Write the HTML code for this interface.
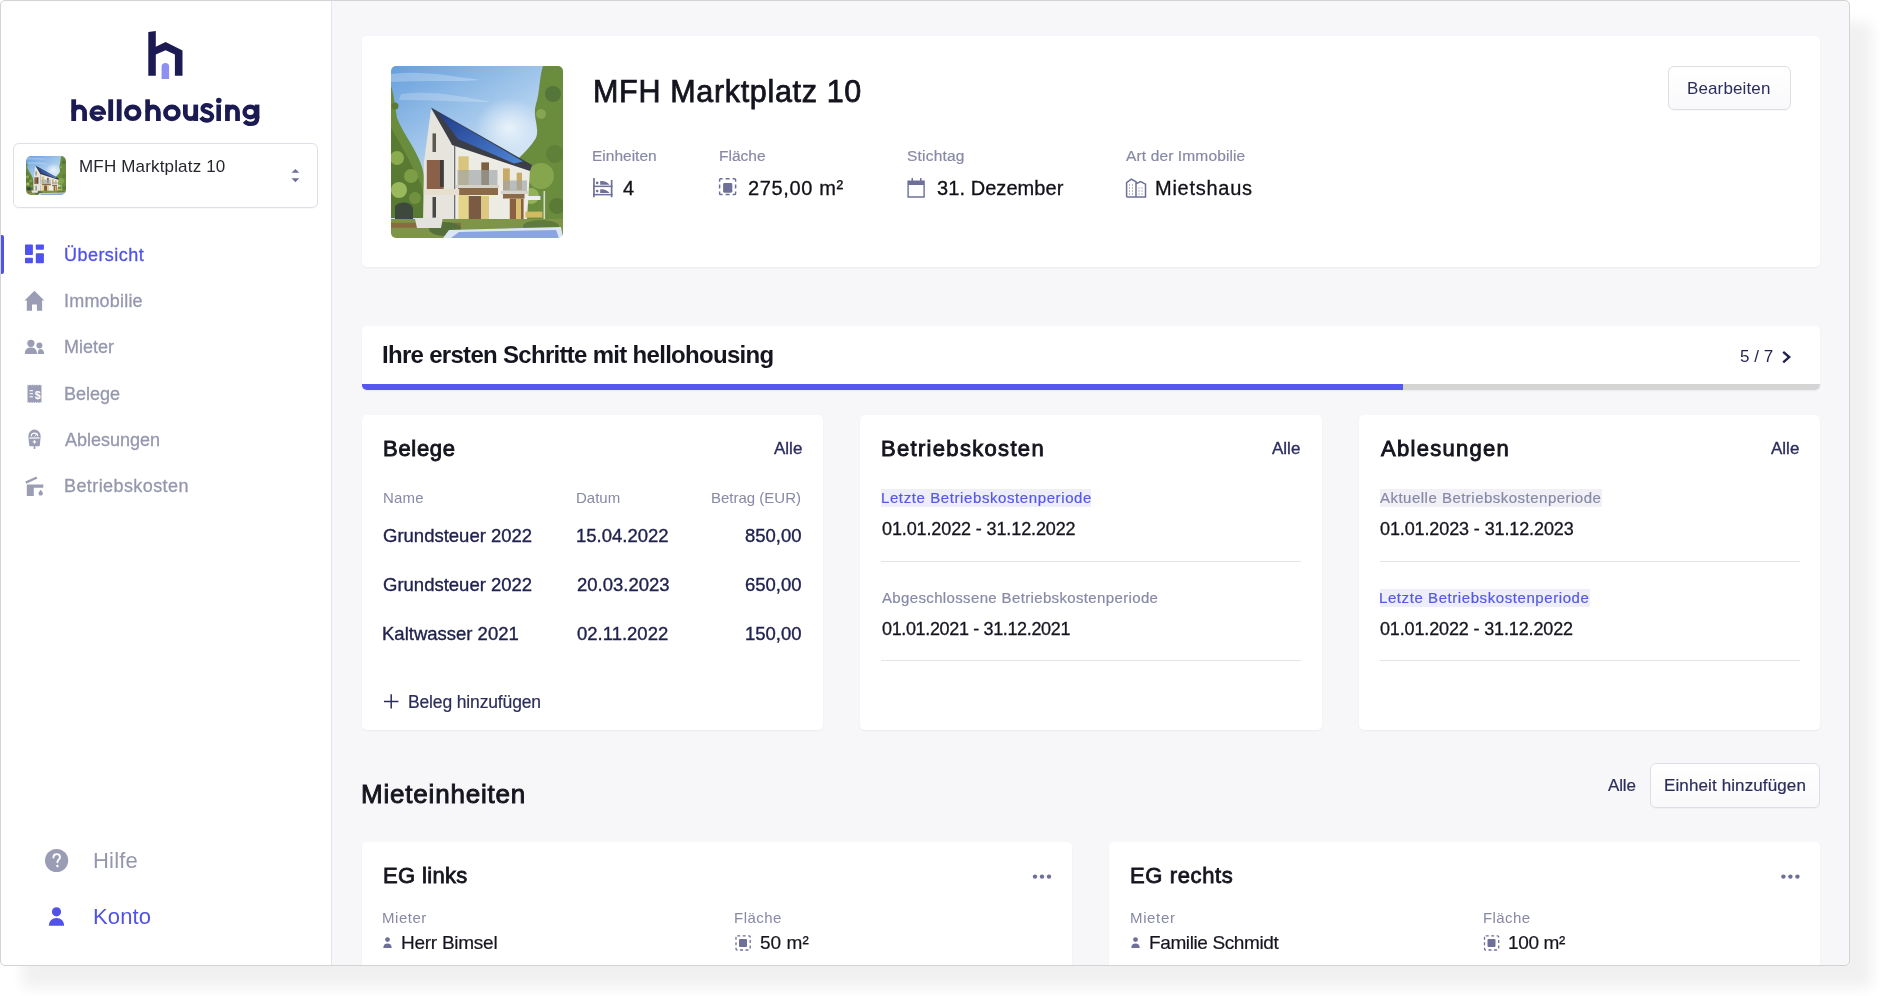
<!DOCTYPE html>
<html><head><meta charset="utf-8"><title>hellohousing</title>
<style>
html,body{margin:0;padding:0;width:1880px;height:996px;background:#fff;overflow:hidden;font-family:"Liberation Sans", sans-serif;}
.t{position:absolute;white-space:nowrap;font-family:"Liberation Sans", sans-serif;will-change:transform;}
.abs{position:absolute;}
#shadow{position:absolute;left:0;top:0;width:1850px;height:966px;border-radius:5px;box-shadow:22px 22px 14px rgba(0,0,0,0.06);}
#clip{position:absolute;left:0;top:0;width:1850px;height:966px;border-radius:5px;overflow:hidden;background:#f7f7f9;}
#frameborder{position:absolute;left:0;top:0;width:1850px;height:966px;border-radius:5px;border:1px solid #d3d3d3;box-sizing:border-box;pointer-events:none;z-index:50;}
#sidebar{position:absolute;left:0;top:0;width:331px;height:966px;background:#fff;border-right:1px solid #e4e4eb;}
.card{position:absolute;background:#fff;border-radius:5px;box-shadow:0 1px 2px rgba(20,20,60,0.05);}
.btn{position:absolute;box-sizing:border-box;border:1px solid #dddee4;border-radius:6px;background:linear-gradient(#ffffff,#f9f9fb);box-shadow:0 1px 1px rgba(0,0,0,0.03);}
.hl{position:absolute;background:#eeeefb;}
.div{position:absolute;height:1px;background:#e3e3e8;}
svg{position:absolute;overflow:visible;}

</style></head><body>
<div id="shadow"></div>
<div id="clip">
  <div id="sidebar"></div>
  <!-- logo mark -->
  <svg style="left:0;top:0" width="1" height="1">
    <polygon fill="#1b1a52" points="148.3,31.9 155.8,31.1 155.8,46.8 165.6,42.1 182.5,50.5 182.5,75.8 174.9,75.8 174.9,54.6 165.6,50.2 155.8,54.6 155.8,75.8 148.3,75.8"/>
    <path fill="#8d8ff2" d="M161.6,79.1 V66.5 a3.75,3.6 0 0 1 7.5,0 V79.1 Z"/>
  </svg>
  <!-- wordmark -->
  <svg style="left:0;top:0" width="1" height="1">
    <g fill="#1b1a52"><rect x="71.3" y="99.3" width="4.80" height="21.70"/><rect x="108.3" y="99.3" width="4.80" height="21.70"/><rect x="116.8" y="99.3" width="4.80" height="21.70"/><rect x="145.3" y="99.3" width="4.60" height="21.70"/><rect x="193.4" y="104.6" width="4.70" height="16.40"/><rect x="216.4" y="104.6" width="4.55" height="16.40"/><circle cx="218.8" cy="100.5" r="2.75"/><rect x="225.1" y="104.6" width="4.70" height="16.40"/><rect x="254.7" y="104.6" width="4.70" height="13.90"/></g>
    <g fill="none" stroke="#1b1a52" stroke-width="4.7"><path d="M73.70,112.40 A5.45,5.45 0 0 1 84.60,112.40 V121.0" /><path stroke-width="3.2" d="M90.50,113.20 H105.90"/><path stroke-width="4.3" d="M91.50,112.80 A6.15,6.15 0 0 1 103.80,114.30"/><path stroke-width="4.3" d="M91.50,112.80 A6.15,6.15 0 0 0 102.45,116.67"/><ellipse cx="132.75" cy="112.8" rx="6.40" ry="5.95"/><path d="M147.60,112.35 A5.40,5.40 0 0 1 158.40,112.35 V121.0" /><ellipse cx="171.9" cy="112.9" rx="6.45" ry="5.95"/><path d="M185.35,104.6 V113.45 A5.20,5.20 0 0 0 195.75,113.45" /><path stroke-width="4.3" d="M211.9,107.6 C210.6,105.9 208.8,105.2 206.9,105.2 C204.2,105.2 202.6,106.6 202.6,108.4 C202.6,110.9 205.2,111.6 207.4,112.2 C210,112.9 212.1,113.7 212.1,116.5 C212.1,118.9 209.9,120.5 207.1,120.5 C204.7,120.5 202.5,119.4 201,117.4"/><path d="M227.45,112.00 A5.05,5.05 0 0 1 237.55,112.00 V121.0" /><ellipse stroke-width="4.4" cx="250.3" cy="112.0" rx="5.75" ry="5.2"/><path stroke-width="4.4" d="M257.05,116 V118.6 C257.05,122.6 254.4,123.9 250.5,123.9 C248,123.9 246.1,123.1 244.5,121.3"/></g>
  </svg>
  <!-- select -->
  <div class="btn" style="left:13px;top:143px;width:305px;height:65px;background:#fff;border-color:#dfe0e7;"></div>
  <div class="abs" style="left:26px;top:156px;width:40px;height:39px;border-radius:5px;overflow:hidden;"><svg style="left:0;top:0" width="40" height="39" viewBox="0 0 172 172" preserveAspectRatio="none"><use href="#houseimg"/></svg></div>
  <svg style="left:0;top:0" width="1" height="1">
    <polygon fill="#6e7099" points="291.5,172.8 295.4,168.9 299.3,172.8"/>
    <polygon fill="#6e7099" points="291.5,178.3 295.4,182.2 299.3,178.3"/>
  </svg>
  <!-- active indicator -->
  <div class="abs" style="left:1px;top:235px;width:3px;height:39px;background:#5053e6;border-radius:0 2px 2px 0;"></div>
  <!-- nav icons -->
  <svg style="left:0;top:0" width="1" height="1">
    <g fill="#4f52ee">
      <rect x="25" y="244.4" width="7.9" height="10.5" rx="0.7"/>
      <rect x="25" y="257.8" width="7.9" height="5.5" rx="0.7"/>
      <rect x="35.8" y="244.6" width="8.1" height="5.2" rx="0.7"/>
      <rect x="35.8" y="253.3" width="8.1" height="10" rx="0.7"/>
    </g>
    <g fill="#9b9db4">
      <!-- home -->
      <path d="M34.4,290.8 L44.3,300.4 L42.1,300.4 L42.1,310.7 L36.9,310.7 L36.9,304.6 L32.0,304.6 L32.0,310.7 L26.8,310.7 L26.8,300.4 L24.5,300.4 Z"/>
      <!-- people -->
      <circle cx="30.9" cy="343.3" r="3.6"/>
      <path d="M24.8,353.9 C24.8,349.5 27.5,347.6 30.9,347.6 C34.3,347.6 37,349.5 37,353.9 Z"/>
      <circle cx="39.4" cy="345.4" r="3"/>
      <path d="M37.7,353.9 C38,351 38.3,349 40,348.9 C42.8,348.9 44.1,351 44.1,353.9 Z"/>
      <!-- receipt -->
      <path d="M27.5,384.5 l1.2,1 1.2,-1 1.15,1 1.15,-1 1.15,1 1.15,-1 1.15,1 1.15,-1 1.15,1 1.15,-1 1.15,1 1.2,-1 V402.9 l-1.2,-1 -1.15,1 -1.15,-1 -1.15,1 -1.15,-1 -1.15,1 -1.15,-1 -1.15,1 -1.15,-1 -1.15,1 -1.2,-1 -1.2,1 Z"/>
      <!-- meter -->
      <path d="M28.4,435.7 A6.1,6.1 0 0 1 40.6,435.7 L40.6,437.2 L39.8,445.5 Q39.7,446.3 38.9,446.3 L35.3,446.3 V448.9 H33.7 V446.3 H30.1 Q29.3,446.3 29.2,445.5 L28.4,437.2 Z"/>
      <!-- faucet -->
      <path d="M25.3,481.6 L36.4,476.4 L37.4,478.5 L26.3,483.7 Z"/>
      <path d="M26.8,484.4 L43.3,484.4 L43.3,487.8 L33.8,487.8 L33.8,495.9 L26.8,495.9 Z"/>
      <path d="M40.7,489.8 C41.7,491.2 42.9,492.4 42.9,493.4 A2.2,2.2 0 0 1 38.5,493.4 C38.5,492.4 39.7,491.2 40.7,489.8 Z"/>
    </g>
    <g fill="#fff">
      <rect x="29.6" y="390.1" width="3.3" height="1.1"/>
      <rect x="29.6" y="393.1" width="3.3" height="1.1"/>
      <rect x="29.6" y="396.2" width="3.3" height="1.1"/>
      <rect x="29.4" y="437.4" width="10.2" height="1.2"/>
      <rect x="33.9" y="440.2" width="1.2" height="3.4"/>
      <rect x="32.8" y="441.3" width="3.4" height="1.2"/>
    </g>
    <path d="M31.3,436.3 A3.2,3.2 0 0 1 37.7,436.3" fill="none" stroke="#fff" stroke-width="1.1"/><path d="M34.5,436.2 L37.2,433.6" fill="none" stroke="#fff" stroke-width="1"/>
    <text x="37.6" y="398.9" font-family="Liberation Sans" font-weight="700" font-size="10.5" fill="#fff" text-anchor="middle">$</text>
    <!-- help -->
    <circle cx="56.6" cy="860.5" r="11.6" fill="#9b9db4"/>
    <path d="M53.4,857.6 C53.4,855.4 54.9,854.1 56.7,854.1 C58.6,854.1 60,855.4 60,857.2 C60,859.6 57.4,859.8 57.4,862.2" fill="none" stroke="#fff" stroke-width="1.9" stroke-linecap="round"/><circle cx="57.4" cy="866" r="1.2" fill="#fff"/>
    <!-- konto -->
    <g fill="#5053e6">
      <circle cx="56.5" cy="911.8" r="4.6"/>
      <path d="M48.9,925.8 C48.9,920.8 52.2,917.9 56.5,917.9 C60.8,917.9 64.1,920.8 64.1,925.8 Z"/>
    </g>
  </svg>

  <!-- HEADER CARD -->
  <div class="card" style="left:362px;top:36px;width:1458px;height:231px;"></div>
  <svg style="left:391px;top:66px;filter:blur(0.45px)" width="172" height="172" viewBox="0 0 172 172">
    <defs>
      <clipPath id="imgclip"><rect x="0" y="0" width="172" height="172" rx="5"/></clipPath>
      <linearGradient id="sky" x1="0" y1="0" x2="0.6" y2="1">
        <stop offset="0" stop-color="#659fdc"/>
        <stop offset="0.45" stop-color="#a6c9ec"/>
        <stop offset="0.8" stop-color="#dcebf7"/>
      </linearGradient>
      <radialGradient id="skylight"><stop offset="0" stop-color="#eef5fb" stop-opacity="0.9"/><stop offset="1" stop-color="#eef5fb" stop-opacity="0"/></radialGradient>
      <filter id="soft" x="0" y="0" width="1" height="1"><feGaussianBlur stdDeviation="0.7"/></filter>
      <linearGradient id="solar" x1="0" y1="0" x2="1" y2="1">
        <stop offset="0" stop-color="#1f3a8a"/>
        <stop offset="1" stop-color="#4f86d6"/>
      </linearGradient>
      <g id="houseimg">
        <g clip-path="url(#imgclip)"><g filter="url(#soft)">
          <rect width="172" height="172" fill="url(#sky)"/>
          <path d="M0,8 C30,4 60,10 90,14 C70,16 40,14 0,16 Z" fill="#ffffff" opacity="0.25"/>
          <path d="M10,28 C40,24 70,30 100,36 C70,36 40,34 8,34 Z" fill="#ffffff" opacity="0.22"/>
          <ellipse cx="118" cy="62" rx="34" ry="30" fill="url(#skylight)"/>
          <!-- trees left -->
          <path d="M0,20 C3,28 4,40 6,52 C9,60 14,68 20,78 C27,90 33,102 33,112 L33,152 L0,152 Z" fill="#6a8c3c"/>
          <path d="M0,62 C6,72 14,86 20,98 C26,110 32,120 33,130 L33,152 L0,152 Z" fill="#587a30"/>
          <circle cx="6" cy="92" r="7" fill="#8aac50"/>
          <circle cx="20" cy="110" r="7" fill="#7d9e46"/>
          <circle cx="8" cy="124" r="8" fill="#9ab85c"/>
          <circle cx="24" cy="132" r="6" fill="#6f9240"/>
          <circle cx="4" cy="40" r="3.5" fill="#5b7a35"/>
          <path d="M4,140 C10,134 20,136 22,142 L22,153 L4,153 Z" fill="#3e4a3c"/>
          <!-- trees right -->
          <path d="M152,0 L172,0 L172,160 L128,160 L128,92 C134,86 140,80 145,72 C149,62 141,50 145,38 C149,26 148,12 152,0 Z" fill="#6a8c3e"/>
          <circle cx="162" cy="28" r="8" fill="#55763a"/>
          <circle cx="150" cy="48" r="5" fill="#86a652"/>
          <circle cx="150" cy="110" r="13" fill="#86a64e"/>
          <circle cx="164" cy="88" r="9" fill="#5e8038"/>
          <circle cx="140" cy="130" r="8" fill="#94b25a"/>
          <circle cx="166" cy="140" r="8" fill="#5a7a36"/>
          <rect x="152.5" y="125" width="1.6" height="30" fill="#d8d8c8"/>
          <!-- house walls -->
          <polygon points="40,43 61,77 63,157 32,157 33,96" fill="#e6e4dc"/>
          <polygon points="61,77 139,103 136,154 63,157" fill="#ecebe4"/>
          <!-- roof -->
          <polygon points="40,41.5 141,99 139,105 61,79 59,75" fill="#3a3d46"/>
          <polygon points="47,46 132,95.5 123,97.5 67,73" fill="url(#solar)"/>
          <!-- gable details -->
          <rect x="41.5" y="67.4" width="3.5" height="18.6" fill="#5a5850"/>
          <rect x="35.8" y="94" width="16.9" height="30" fill="#8a6048"/>
          <rect x="49" y="94" width="3.7" height="27" fill="#3c3c3c"/>
          <rect x="41.5" y="131" width="3.5" height="24" fill="#4a4a4a"/>
          <rect x="63" y="80" width="1.3" height="76" fill="#707070"/>
          <!-- long wall windows upper -->
          <rect x="67.4" y="90.3" width="10.3" height="29" fill="#d9c47e"/>
          <rect x="90.3" y="96.4" width="7.7" height="23.3" fill="#7a6040"/>
          <rect x="112" y="102.4" width="6.8" height="21.6" fill="#c8aa68"/>
          <rect x="125.7" y="106.7" width="5.3" height="17.3" fill="#c8aa68"/>
          <rect x="66.5" y="104" width="40" height="16" fill="#a0a4a8" opacity="0.65"/>
          <rect x="112" y="114.5" width="24" height="11" fill="#a0a4a8" opacity="0.65"/>
          <rect x="65" y="119" width="43" height="3" fill="#d6d2c8"/>
          <rect x="110" y="125" width="27" height="3" fill="#d6d2c8"/>
          <rect x="67" y="122" width="40" height="7" fill="#8a6a4a"/>
          <rect x="112" y="128" width="21.5" height="4.5" fill="#8a6a4a"/>
          <!-- ground floor -->
          <rect x="67.4" y="129" width="10.3" height="26" fill="#e4d48a"/>
          <rect x="77.7" y="130" width="12.6" height="25" fill="#7a5a40"/>
          <rect x="90.3" y="130" width="7.7" height="25" fill="#dcc880"/>
          <rect x="118.8" y="132.6" width="13.8" height="21" fill="#8a6040"/>
          <rect x="125" y="133" width="5" height="20" fill="#d8c070"/>
          <rect x="32.8" y="123" width="35.4" height="6" fill="#e6dfd0"/>
          <rect x="134.4" y="130" width="15" height="4" fill="#eeeeee"/>
          <rect x="134.4" y="145.6" width="17" height="6" fill="#d2ba60"/>
          <!-- ground -->
          <rect x="0" y="153" width="172" height="19" fill="#7e9448"/>
          <rect x="0" y="156.8" width="70" height="5" fill="#8a6a40"/>
          <ellipse cx="54" cy="163" rx="16" ry="7" fill="#56703a"/>
          <ellipse cx="150" cy="160" rx="18" ry="6" fill="#5e7a3c"/>
          <polygon points="24,153 52,151 50,162 26,162" fill="#e4e2dc"/>
          <polygon points="58,164 170,161 172,172 52,172" fill="#dbe6f2"/>
          <polygon points="68,166 165,164 168,172 60,172" fill="#8aa6dc"/>
        </g></g>
      </g>
    </defs>
    <use href="#houseimg"/>
  </svg>
  <!-- stat icons -->
  <svg style="left:0;top:0" width="1" height="1">
    <g fill="#6e7099">
      <!-- bunk bed -->
      <rect x="593.1" y="178.1" width="1.7" height="19.1"/>
      <rect x="610.8" y="180" width="1.7" height="17.2"/>
      <rect x="593.1" y="185.6" width="19.4" height="1.5"/>
      <rect x="593.1" y="193.9" width="19.4" height="1.5"/>
      <circle cx="597.2" cy="182.9" r="1.3"/>
      <path d="M600.2,184.8 L600.2,181 C604,180.6 607.5,182 609.6,184.8 Z"/>
      <circle cx="597.2" cy="191.1" r="1.3"/>
      <path d="M600.2,193 L600.2,189.2 C604,188.8 607.5,190.2 609.6,193 Z"/>
      <!-- area -->
      <rect x="723.1" y="183" width="9.2" height="9.7" rx="1.4"/>
      <!-- calendar -->
      <path d="M907.4,180.5 H924.8 V197.7 H907.4 Z M908.8,185 V196.3 H923.4 V185 Z" fill-rule="evenodd"/>
      <rect x="911.5" y="178" width="1.5" height="4"/>
      <rect x="920" y="178" width="1.5" height="4"/>
    </g>
    <g fill="none" stroke="#6e7099" stroke-width="1.5">
      <path d="M719.6,181.7 V179.9 Q719.6,178.8 720.7,178.8 H722.6 M725.6,178.8 H729.6 M732.6,178.8 H734.5 Q735.6,178.8 735.6,179.9 V181.7 M735.6,184.6 V188.6 M735.6,191.6 V193.4 Q735.6,194.5 734.5,194.5 H732.6 M729.6,194.5 H725.6 M722.6,194.5 H720.7 Q719.6,194.5 719.6,193.4 V191.6 M719.6,188.6 V184.6"/>
      <!-- building -->
      <path d="M1126.6,196.9 V182.6 L1131.3,179.2 L1136,181.8 V196.9 M1136,196.9 V183.8 L1140.6,181.5 L1145.5,184.2 V196.9 H1126.6"/>
    </g>
    <g fill="#6e7099">
      <rect x="1129" y="184.5" width="1" height="1"/><rect x="1132" y="184.5" width="1" height="1"/>
      <rect x="1129" y="187.5" width="1" height="1"/><rect x="1132" y="187.5" width="1" height="1"/>
      <rect x="1129" y="190.5" width="1" height="1"/><rect x="1132" y="190.5" width="1" height="1"/>
      <rect x="1129" y="193.5" width="1" height="1"/><rect x="1132" y="193.5" width="1" height="1"/>
      <rect x="1138.5" y="187.5" width="1" height="1"/><rect x="1141.5" y="187.5" width="1" height="1"/>
      <rect x="1138.5" y="190.5" width="1" height="1"/><rect x="1141.5" y="190.5" width="1" height="1"/>
      <rect x="1138.5" y="193.5" width="1" height="1"/><rect x="1141.5" y="193.5" width="1" height="1"/>
    </g>
  </svg>
  <div class="btn" style="left:1668px;top:66px;width:123px;height:44px;"></div>

  <!-- STEPS CARD -->
  <div class="card" style="left:362px;top:326.2px;width:1458px;height:63.6px;overflow:hidden;">
    <div class="abs" style="left:0;top:58.1px;width:1458px;height:5.5px;background:#d4d4d5;"></div>
    <div class="abs" style="left:0;top:58.1px;width:1041px;height:5.5px;background:#5557f0;"></div>
  </div>
  <svg style="left:0;top:0" width="1" height="1">
    <path d="M1783.2,351.8 L1789.2,357.1 L1783.2,362.4" fill="none" stroke="#1f2150" stroke-width="2.4"/>
  </svg>

  <!-- 3 CARDS -->
  <div class="card" style="left:362px;top:415px;width:461px;height:315px;"></div>
  <div class="card" style="left:860px;top:415px;width:462px;height:315px;"></div>
  <div class="card" style="left:1359px;top:415px;width:461px;height:315px;"></div>
  <svg style="left:0;top:0" width="1" height="1">
    <path d="M384,701.4 H398.4 M391.2,694.2 V708.6" stroke="#2b2d5c" stroke-width="1.5" fill="none"/>
  </svg>
  <div class="hl" style="left:881px;top:489px;width:210px;height:18px;"></div>
  <div class="hl" style="left:1380px;top:489px;width:222px;height:18px;background:#f0f0f6;"></div>
  <div class="hl" style="left:1380px;top:589px;width:210px;height:18px;"></div>
  <div class="div" style="left:881px;top:561px;width:420px;"></div>
  <div class="div" style="left:881px;top:660px;width:420px;"></div>
  <div class="div" style="left:1380px;top:561px;width:420px;"></div>
  <div class="div" style="left:1380px;top:660px;width:420px;"></div>

  <!-- MIETEINHEITEN -->
  <div class="btn" style="left:1650px;top:763px;width:170px;height:45px;"></div>
  <div class="card" style="left:362px;top:842px;width:710px;height:200px;"></div>
  <div class="card" style="left:1109px;top:842px;width:711px;height:200px;"></div>
  <svg style="left:0;top:0" width="1" height="1">
    <g fill="#6e7099">
      <circle cx="1035" cy="876.6" r="2.2"/><circle cx="1042" cy="876.6" r="2.2"/><circle cx="1049" cy="876.6" r="2.2"/>
      <circle cx="1783.4" cy="876.6" r="2.2"/><circle cx="1790.4" cy="876.6" r="2.2"/><circle cx="1797.4" cy="876.6" r="2.2"/>
      <circle cx="387.5" cy="939.6" r="2.4"/>
      <path d="M383.3,948 C383.3,945 385,943.6 387.5,943.6 C390,943.6 391.7,945 391.7,948 Z"/>
      <circle cx="1135.5" cy="939.6" r="2.4"/>
      <path d="M1131.3,948 C1131.3,945 1133,943.6 1135.5,943.6 C1138,943.6 1139.7,945 1139.7,948 Z"/>
      <rect x="739" y="939" width="8" height="8" rx="1"/>
      <rect x="1487.5" y="939" width="8" height="8" rx="1"/>
    </g>
    <g fill="none" stroke="#6e7099" stroke-width="1.3" stroke-dasharray="3 2.5">
      <rect x="736" y="935.8" width="14.2" height="14.2" rx="1.2"/>
      <rect x="1484.5" y="935.8" width="14.2" height="14.2" rx="1.2"/>
    </g>
  </svg>

<div class="t" style="left:79.40px;top:158.00px;font-size:17px;line-height:17px;font-weight:400;color:#26262e;letter-spacing:0.167px;">MFH Marktplatz 10</div>
<div class="t" style="left:63.75px;top:246.00px;font-size:18px;line-height:18px;font-weight:400;color:#5053e6;letter-spacing:0.459px;-webkit-text-stroke:0.3px #5053e6">Übersicht</div>
<div class="t" style="left:63.75px;top:292.00px;font-size:18px;line-height:18px;font-weight:400;color:#9597ae;letter-spacing:0.199px;-webkit-text-stroke:0.3px #9597ae">Immobilie</div>
<div class="t" style="left:63.75px;top:338.00px;font-size:18px;line-height:18px;font-weight:400;color:#9597ae;-webkit-text-stroke:0.3px #9597ae">Mieter</div>
<div class="t" style="left:63.75px;top:385.00px;font-size:18px;line-height:18px;font-weight:400;color:#9597ae;-webkit-text-stroke:0.3px #9597ae">Belege</div>
<div class="t" style="left:64.75px;top:431.00px;font-size:18px;line-height:18px;font-weight:400;color:#9597ae;-webkit-text-stroke:0.3px #9597ae">Ablesungen</div>
<div class="t" style="left:63.75px;top:477.00px;font-size:18px;line-height:18px;font-weight:400;color:#9597ae;letter-spacing:0.411px;-webkit-text-stroke:0.3px #9597ae">Betriebskosten</div>
<div class="t" style="left:92.50px;top:850.00px;font-size:22px;line-height:22px;font-weight:400;color:#9597ae;letter-spacing:0.206px;">Hilfe</div>
<div class="t" style="left:92.70px;top:906.00px;font-size:22px;line-height:22px;font-weight:400;color:#5053e6;letter-spacing:0.111px;">Konto</div>
<div class="t" style="left:592.77px;top:76.00px;font-size:30.5px;line-height:30.5px;font-weight:400;color:#14141e;letter-spacing:0.669px;-webkit-text-stroke:0.75px #14141e">MFH Marktplatz 10</div>
<div class="t" style="left:592.40px;top:148.00px;font-size:15.5px;line-height:15.5px;font-weight:400;color:#8789a6;-webkit-text-stroke:0.2px #8789a6">Einheiten</div>
<div class="t" style="left:718.50px;top:148.00px;font-size:15.5px;line-height:15.5px;font-weight:400;color:#8789a6;letter-spacing:0.020px;-webkit-text-stroke:0.2px #8789a6">Fläche</div>
<div class="t" style="left:906.70px;top:148.00px;font-size:15.5px;line-height:15.5px;font-weight:400;color:#8789a6;letter-spacing:0.202px;-webkit-text-stroke:0.2px #8789a6">Stichtag</div>
<div class="t" style="left:1125.80px;top:148.00px;font-size:15.5px;line-height:15.5px;font-weight:400;color:#8789a6;letter-spacing:0.130px;-webkit-text-stroke:0.2px #8789a6">Art der Immobilie</div>
<div class="t" style="left:623.25px;top:178.00px;font-size:20px;line-height:20px;font-weight:400;color:#111118;-webkit-text-stroke:0.3px #111118">4</div>
<div class="t" style="left:748.25px;top:178.00px;font-size:20px;line-height:20px;font-weight:400;color:#111118;letter-spacing:0.639px;-webkit-text-stroke:0.3px #111118">275,00 m²</div>
<div class="t" style="left:936.55px;top:178.00px;font-size:20px;line-height:20px;font-weight:400;color:#111118;letter-spacing:0.068px;-webkit-text-stroke:0.3px #111118">31. Dezember</div>
<div class="t" style="left:1154.65px;top:178.00px;font-size:20px;line-height:20px;font-weight:400;color:#111118;letter-spacing:0.743px;-webkit-text-stroke:0.3px #111118">Mietshaus</div>
<div class="t" style="left:1687.40px;top:80.00px;font-size:17px;line-height:17px;font-weight:400;color:#2b2d5c;letter-spacing:0.125px;">Bearbeiten</div>
<div class="t" style="left:382.00px;top:343.00px;font-size:24px;line-height:24px;font-weight:700;color:#15151f;letter-spacing:-0.701px;">Ihre ersten Schritte mit hellohousing</div>
<div class="t" style="left:1739.70px;top:348.00px;font-size:17px;line-height:17px;font-weight:400;color:#1f2150;letter-spacing:0.044px;">5 / 7</div>
<div class="t" style="left:383.15px;top:438.00px;font-size:22px;line-height:22px;font-weight:400;color:#15151f;letter-spacing:0.706px;-webkit-text-stroke:0.9px #15151f">Belege</div>
<div class="t" style="left:880.95px;top:438.00px;font-size:22px;line-height:22px;font-weight:400;color:#15151f;letter-spacing:1.316px;-webkit-text-stroke:0.9px #15151f">Betriebskosten</div>
<div class="t" style="left:1380.75px;top:438.00px;font-size:22px;line-height:22px;font-weight:400;color:#15151f;letter-spacing:1.281px;-webkit-text-stroke:0.9px #15151f">Ablesungen</div>
<div class="t" style="left:773.83px;top:440.00px;font-size:17px;line-height:17px;font-weight:400;color:#2b2d5c;-webkit-text-stroke:0.35px #2b2d5c">Alle</div>
<div class="t" style="left:1271.83px;top:440.00px;font-size:17px;line-height:17px;font-weight:400;color:#2b2d5c;-webkit-text-stroke:0.35px #2b2d5c">Alle</div>
<div class="t" style="left:1770.83px;top:440.00px;font-size:17px;line-height:17px;font-weight:400;color:#2b2d5c;-webkit-text-stroke:0.35px #2b2d5c">Alle</div>
<div class="t" style="left:382.70px;top:490.00px;font-size:15px;line-height:15px;font-weight:400;color:#8789a6;letter-spacing:0.177px;">Name</div>
<div class="t" style="left:576.30px;top:490.00px;font-size:15px;line-height:15px;font-weight:400;color:#8789a6;">Datum</div>
<div class="t" style="left:711.37px;top:490.00px;font-size:15px;line-height:15px;font-weight:400;color:#8789a6;">Betrag (EUR)</div>
<div class="t" style="left:383.38px;top:527.00px;font-size:18.5px;line-height:18.5px;font-weight:400;color:#20224e;-webkit-text-stroke:0.35px #20224e">Grundsteuer 2022</div>
<div class="t" style="left:575.88px;top:527.00px;font-size:18.5px;line-height:18.5px;font-weight:400;color:#20224e;-webkit-text-stroke:0.35px #20224e">15.04.2022</div>
<div class="t" style="left:744.93px;top:527.00px;font-size:18.5px;line-height:18.5px;font-weight:400;color:#20224e;-webkit-text-stroke:0.35px #20224e">850,00</div>
<div class="t" style="left:383.38px;top:576.00px;font-size:18.5px;line-height:18.5px;font-weight:400;color:#20224e;-webkit-text-stroke:0.35px #20224e">Grundsteuer 2022</div>
<div class="t" style="left:576.88px;top:576.00px;font-size:18.5px;line-height:18.5px;font-weight:400;color:#20224e;-webkit-text-stroke:0.35px #20224e">20.03.2023</div>
<div class="t" style="left:744.93px;top:576.00px;font-size:18.5px;line-height:18.5px;font-weight:400;color:#20224e;-webkit-text-stroke:0.35px #20224e">650,00</div>
<div class="t" style="left:382.38px;top:625.00px;font-size:18.5px;line-height:18.5px;font-weight:400;color:#20224e;-webkit-text-stroke:0.35px #20224e">Kaltwasser 2021</div>
<div class="t" style="left:576.88px;top:625.00px;font-size:18.5px;line-height:18.5px;font-weight:400;color:#20224e;-webkit-text-stroke:0.35px #20224e">02.11.2022</div>
<div class="t" style="left:744.93px;top:625.00px;font-size:18.5px;line-height:18.5px;font-weight:400;color:#20224e;-webkit-text-stroke:0.35px #20224e">150,00</div>
<div class="t" style="left:407.60px;top:694.00px;font-size:17.5px;line-height:17.5px;font-weight:400;color:#2b2d5c;letter-spacing:-0.148px;-webkit-text-stroke:0.2px #2b2d5c">Beleg hinzufügen</div>
<div class="t" style="left:880.50px;top:490.00px;font-size:15px;line-height:15px;font-weight:400;color:#5558e3;letter-spacing:0.595px;-webkit-text-stroke:0.2px #5558e3">Letzte Betriebskostenperiode</div>
<div class="t" style="left:881.55px;top:520.00px;font-size:18px;line-height:18px;font-weight:400;color:#15151f;letter-spacing:-0.116px;-webkit-text-stroke:0.3px #15151f">01.01.2022 - 31.12.2022</div>
<div class="t" style="left:881.50px;top:590.00px;font-size:15px;line-height:15px;font-weight:400;color:#8789a6;letter-spacing:0.355px;-webkit-text-stroke:0.2px #8789a6">Abgeschlossene Betriebskostenperiode</div>
<div class="t" style="left:881.55px;top:620.00px;font-size:18px;line-height:18px;font-weight:400;color:#15151f;letter-spacing:-0.353px;-webkit-text-stroke:0.3px #15151f">01.01.2021 - 31.12.2021</div>
<div class="t" style="left:1380.30px;top:490.00px;font-size:15px;line-height:15px;font-weight:400;color:#8789a6;letter-spacing:0.484px;-webkit-text-stroke:0.2px #8789a6">Aktuelle Betriebskostenperiode</div>
<div class="t" style="left:1380.35px;top:520.00px;font-size:18px;line-height:18px;font-weight:400;color:#15151f;letter-spacing:-0.112px;-webkit-text-stroke:0.3px #15151f">01.01.2023 - 31.12.2023</div>
<div class="t" style="left:1379.30px;top:590.00px;font-size:15px;line-height:15px;font-weight:400;color:#5558e3;letter-spacing:0.576px;-webkit-text-stroke:0.2px #5558e3">Letzte Betriebskostenperiode</div>
<div class="t" style="left:1380.35px;top:620.00px;font-size:18px;line-height:18px;font-weight:400;color:#15151f;letter-spacing:-0.144px;-webkit-text-stroke:0.3px #15151f">01.01.2022 - 31.12.2022</div>
<div class="t" style="left:360.65px;top:781.00px;font-size:26px;line-height:26px;font-weight:400;color:#15151f;letter-spacing:0.800px;-webkit-text-stroke:0.9px #15151f">Mieteinheiten</div>
<div class="t" style="left:1608.10px;top:777.00px;font-size:17px;line-height:17px;font-weight:400;color:#2b2d5c;letter-spacing:-0.131px;-webkit-text-stroke:0.2px #2b2d5c">Alle</div>
<div class="t" style="left:1663.90px;top:777.00px;font-size:17px;line-height:17px;font-weight:400;color:#2b2d5c;letter-spacing:0.116px;-webkit-text-stroke:0.2px #2b2d5c">Einheit hinzufügen</div>
<div class="t" style="left:382.60px;top:865.00px;font-size:22px;line-height:22px;font-weight:400;color:#15151f;letter-spacing:0.342px;-webkit-text-stroke:0.8px #15151f">EG links</div>
<div class="t" style="left:382.20px;top:910.00px;font-size:15px;line-height:15px;font-weight:400;color:#8789a6;letter-spacing:0.524px;">Mieter</div>
<div class="t" style="left:734.30px;top:910.00px;font-size:15px;line-height:15px;font-weight:400;color:#8789a6;letter-spacing:0.484px;">Fläche</div>
<div class="t" style="left:400.90px;top:933.00px;font-size:19px;line-height:19px;font-weight:400;color:#15151f;letter-spacing:-0.261px;-webkit-text-stroke:0.2px #15151f">Herr Bimsel</div>
<div class="t" style="left:760.40px;top:933.00px;font-size:19px;line-height:19px;font-weight:400;color:#15151f;letter-spacing:0.040px;-webkit-text-stroke:0.2px #15151f">50 m²</div>
<div class="t" style="left:1130.40px;top:865.00px;font-size:22px;line-height:22px;font-weight:400;color:#15151f;letter-spacing:0.612px;-webkit-text-stroke:0.8px #15151f">EG rechts</div>
<div class="t" style="left:1130.00px;top:910.00px;font-size:15px;line-height:15px;font-weight:400;color:#8789a6;letter-spacing:0.644px;">Mieter</div>
<div class="t" style="left:1482.70px;top:910.00px;font-size:15px;line-height:15px;font-weight:400;color:#8789a6;letter-spacing:0.404px;">Fläche</div>
<div class="t" style="left:1148.70px;top:933.00px;font-size:19px;line-height:19px;font-weight:400;color:#15151f;letter-spacing:-0.390px;-webkit-text-stroke:0.2px #15151f">Familie Schmidt</div>
<div class="t" style="left:1507.80px;top:933.00px;font-size:19px;line-height:19px;font-weight:400;color:#15151f;letter-spacing:-0.341px;-webkit-text-stroke:0.2px #15151f">100 m²</div>
</div>
<div id="frameborder"></div>

</body></html>
